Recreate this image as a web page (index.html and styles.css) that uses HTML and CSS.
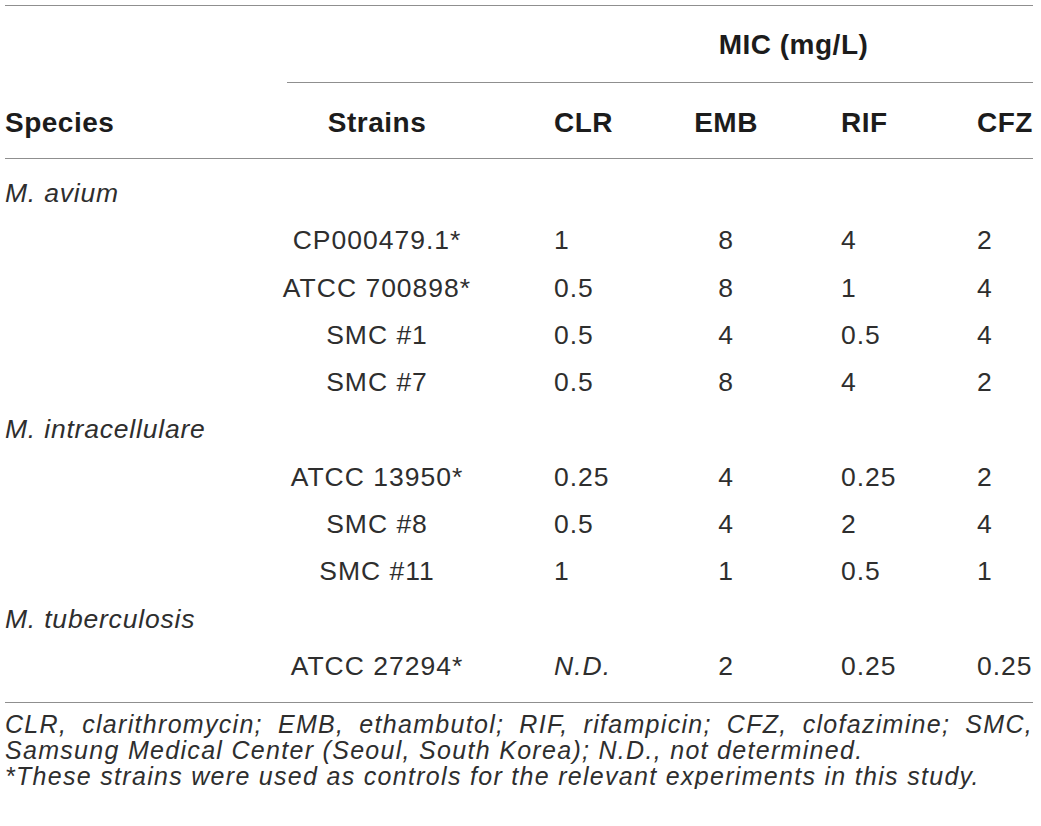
FILE: index.html
```html
<!DOCTYPE html>
<html lang="en">
<head>
    <meta charset="UTF-8">
    <meta name="viewport" content="width=device-width, initial-scale=1.0">
    <title>MIC of antibiotics against mycobacterial strains</title>
    <link rel="stylesheet" href="styles.css">
</head>
<body>
    <div class="mic-table">
        <div class="thead">
            <div class="row group-row">
                <div class="mic-label">MIC (mg/L)</div>
                <div class="mic-rule"></div>
            </div>
            <div class="row col-row">
                <div class="cell species">Species</div>
                <div class="cell strain">Strains</div>
                <div class="cell left">CLR</div>
                <div class="cell center">EMB</div>
                <div class="cell left">RIF</div>
                <div class="cell left">CFZ</div>
            </div>
        </div>

        <div class="tbody">
            <div class="row species-row"><em>M. avium</em></div>
            <div class="row">
                <div class="cell"></div>
                <div class="cell strain">CP000479.1*</div>
                <div class="cell left">1</div>
                <div class="cell center">8</div>
                <div class="cell left">4</div>
                <div class="cell left">2</div>
            </div>
            <div class="row">
                <div class="cell"></div>
                <div class="cell strain">ATCC 700898*</div>
                <div class="cell left">0.5</div>
                <div class="cell center">8</div>
                <div class="cell left">1</div>
                <div class="cell left">4</div>
            </div>
            <div class="row">
                <div class="cell"></div>
                <div class="cell strain">SMC #1</div>
                <div class="cell left">0.5</div>
                <div class="cell center">4</div>
                <div class="cell left">0.5</div>
                <div class="cell left">4</div>
            </div>
            <div class="row">
                <div class="cell"></div>
                <div class="cell strain">SMC #7</div>
                <div class="cell left">0.5</div>
                <div class="cell center">8</div>
                <div class="cell left">4</div>
                <div class="cell left">2</div>
            </div>

            <div class="row species-row"><em>M. intracellulare</em></div>
            <div class="row">
                <div class="cell"></div>
                <div class="cell strain">ATCC 13950*</div>
                <div class="cell left">0.25</div>
                <div class="cell center">4</div>
                <div class="cell left">0.25</div>
                <div class="cell left">2</div>
            </div>
            <div class="row">
                <div class="cell"></div>
                <div class="cell strain">SMC #8</div>
                <div class="cell left">0.5</div>
                <div class="cell center">4</div>
                <div class="cell left">2</div>
                <div class="cell left">4</div>
            </div>
            <div class="row">
                <div class="cell"></div>
                <div class="cell strain">SMC #11</div>
                <div class="cell left">1</div>
                <div class="cell center">1</div>
                <div class="cell left">0.5</div>
                <div class="cell left">1</div>
            </div>

            <div class="row species-row"><em>M. tuberculosis</em></div>
            <div class="row">
                <div class="cell"></div>
                <div class="cell strain">ATCC 27294*</div>
                <div class="cell left"><em>N.D.</em></div>
                <div class="cell center">2</div>
                <div class="cell left">0.25</div>
                <div class="cell left">0.25</div>
            </div>
        </div>

        <p class="footnote">
            CLR, clarithromycin; EMB, ethambutol; RIF, rifampicin; CFZ, clofazimine; SMC, Samsung Medical Center (Seoul, South Korea); N.D., not determined.<br>
            *These strains were used as controls for the relevant experiments in this study.
        </p>
    </div>
</body>
</html>
```

FILE: styles.css
```css
body {
    margin: 5px 8px 0 5px;
    background-color: white;
    font-family: "Liberation Sans", Arial, sans-serif;
    color: #2e2e2e;
}
.mic-table {
    width: 1028px;
    border-top: 1px solid #8f8f8f;
}
.row {
    display: grid;
    grid-template-columns: 195px 354px 57px 230px 136px 56px;
    white-space: nowrap;
}
.thead {
    font-weight: bold;
    font-size: 28px;
    letter-spacing: 0.5px;
    color: #1c1c1c;
    border-bottom: 1px solid #8f8f8f;
}
.group-row {
    grid-template-rows: 76px 1px;
}
.mic-label {
    grid-column: 3 / 7;
    align-self: center;
    text-align: center;
    padding-top: 1px;
}
.mic-rule {
    grid-column: 2 / 7;
    margin-left: 87px;
    background-color: #8f8f8f;
}
.col-row {
    height: 75px;
    align-items: center;
    padding-top: 4px;
    box-sizing: border-box;
}
.tbody {
    font-size: 26.5px;
    letter-spacing: 1px;
    padding: 11px 0 12px;
    border-bottom: 1px solid #8f8f8f;
}
.tbody .row {
    height: 47.3px;
    line-height: 47.3px;
}
.species-row {
    display: block;
    letter-spacing: 0.8px;
}
.strain {
    text-align: center;
}
.left {
    text-align: left;
}
.center {
    text-align: center;
}
.footnote {
    margin: 8px 0 0;
    font-size: 25px;
    line-height: 26px;
    letter-spacing: 1.3px;
    font-style: italic;
    text-align: justify;
    color: #2e2e2e;
}
```
